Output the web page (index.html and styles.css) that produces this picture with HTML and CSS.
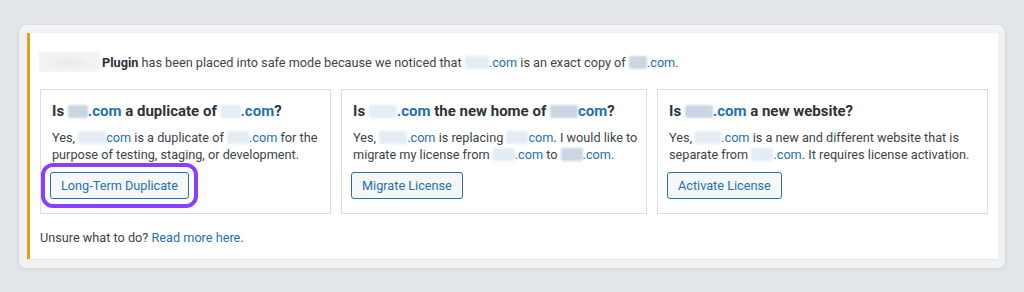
FILE: index.html
```html
<!DOCTYPE html>
<html lang="en">
<head>
<meta charset="utf-8">
<title>Safe mode notice</title>
<link rel="stylesheet" href="styles.css">
</head>
<body>
<div class="frame">
  <div class="notice">
    <p class="lead"><span class="blur blur-logo"></span><strong>Plugin</strong> has been placed into safe mode because we noticed that <a class="link" href="#"><span class="blur w24"></span>.com</a> is an exact copy of <a class="link" href="#"><span class="blur w18 dark"></span>.com</a>.</p>
    <div class="cards">
      <div class="card card-a">
        <h3 class="card-title">Is <a class="link" href="#"><span class="blur w20 dark"></span>.com</a> a duplicate of <a class="link" href="#"><span class="blur w20"></span>.com</a>?</h3>
        <p class="card-text">Yes, <a class="link" href="#"><span class="blur w28"></span>com</a> is a duplicate of <a class="link" href="#"><span class="blur w22"></span>.com</a> for the purpose of testing, staging, or development.</p>
        <button class="btn btn-highlight" type="button">Long-Term Duplicate</button>
      </div>
      <div class="card card-b">
        <h3 class="card-title">Is <a class="link" href="#"><span class="blur w28"></span>.com</a> the new home of <a class="link" href="#"><span class="blur w28 dark"></span>com</a>?</h3>
        <p class="card-text">Yes, <a class="link" href="#"><span class="blur w28"></span>.com</a> is replacing <a class="link" href="#"><span class="blur w22"></span>com</a>. I would like to migrate my license from <a class="link" href="#"><span class="blur w22"></span>.com</a> to <a class="link" href="#"><span class="blur w22 dark"></span>.com</a>.</p>
        <button class="btn" type="button">Migrate License</button>
      </div>
      <div class="card card-c">
        <h3 class="card-title">Is <a class="link" href="#"><span class="blur w28 dark"></span>.com</a> a new website?</h3>
        <p class="card-text">Yes, <a class="link" href="#"><span class="blur w26"></span>.com</a> is a new and different website that is separate from <a class="link" href="#"><span class="blur w22"></span>.com</a>. It requires license activation.</p>
        <button class="btn" type="button">Activate License</button>
      </div>
    </div>
    <p class="foot">Unsure what to do? <a class="link" href="#">Read more here</a>.</p>
  </div>
</div>
</body>
</html>
```

FILE: styles.css
```css
* { box-sizing: border-box; }

html, body {
  margin: 0;
  padding: 0;
}

body {
  width: 1024px;
  height: 292px;
  background: #e3e6ea;
  font-family: Roboto, "Liberation Sans", sans-serif;
  font-size: 12.7px;
  color: #3c434a;
  padding-top: 25px;
  padding-left: 19px;
}

.frame {
  width: 986px;
  height: 243px;
  padding: 8px 7px 9px 8px;
  background: #f2f2f3;
  border-radius: 7px;
  box-shadow: 0 2px 6px rgba(0, 0, 0, 0.06), 0 0 0 1px rgba(0, 0, 0, 0.02);
}

.notice {
  height: 100%;
  background: #ffffff;
  border-left: 3px solid #dba617;
  box-shadow: 0 1px 1px rgba(0, 0, 0, 0.05);
  padding: 19px 10px 0 10px;
}

.lead {
  margin: 0;
  line-height: 20px;
  white-space: nowrap;
}

.lead strong {
  font-weight: 700;
  color: #2c3338;
}

.link {
  color: #2271b1;
  text-decoration: none;
}

.blur {
  display: inline-block;
  height: 13px;
  vertical-align: -2px;
  background: #e4ecf4;
  border-radius: 2px;
  filter: blur(1px);
}

.blur.dark { background: #cad6e4; }

.w18 { width: 18px; }
.w20 { width: 20px; }
.w22 { width: 22px; }
.w24 { width: 24px; }
.w26 { width: 26px; }
.w28 { width: 28px; }

.blur-logo {
  width: 61px;
  height: 20px;
  vertical-align: -5px;
  background: radial-gradient(ellipse at center, #e9e9ea 0%, #f2f2f3 55%, #f6f6f6 100%);
  border-radius: 0;
  filter: none;
  margin-left: -1px;
  margin-right: 2px;
}

.cards {
  display: grid;
  grid-template-columns: 291px 306px 331px;
  gap: 10px;
  margin-top: 16px;
}

.card {
  border: 1px solid #dcdcde;
  padding: 11px 8px 13px 11px;
  height: 125px;
}

.card-title {
  margin: 0;
  font-size: 15px;
  line-height: 20px;
  font-weight: 700;
  color: #2c3338;
  white-space: nowrap;
}

.card-text {
  margin: 8px 0 0 0;
  line-height: 17px;
}

.btn {
  display: inline-block;
  margin: 9px 0 0 -2px;
  height: 27px;
  padding: 0 10px;
  font-family: inherit;
  font-size: 12.7px;
  line-height: 25px;
  color: #2271b1;
  background: #f6f7f7;
  border: 1px solid #2271b1;
  border-radius: 3px;
  cursor: pointer;
}

.btn-highlight {
  outline: 4px solid #8a3ffc;
  outline-offset: 5px;
}

.foot {
  margin: 14px 0 0 0;
  line-height: 20px;
}
```
